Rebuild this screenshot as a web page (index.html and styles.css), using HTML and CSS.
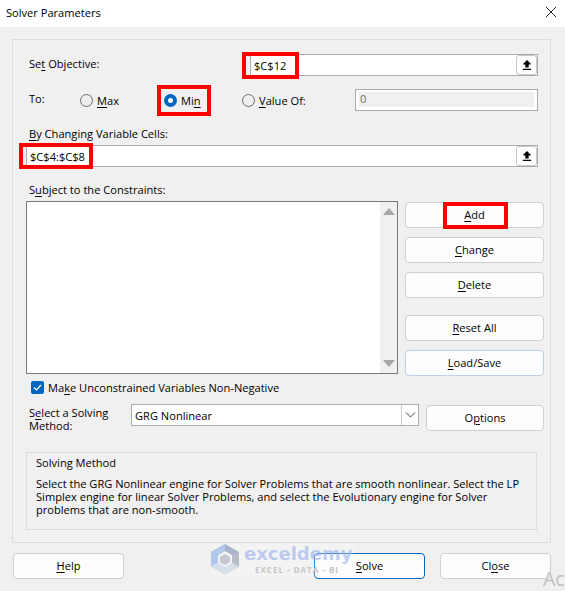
FILE: index.html
```html
<!DOCTYPE html>
<html lang="en">
<head>
  <meta charset="UTF-8">
  <meta name="viewport" content="width=device-width, initial-scale=1.0">
  <title>Solver Parameters</title>
  <link rel="stylesheet" href="styles.css">
</head>
<body>
  <header class="titlebar">
    <div class="title">Solver Parameters</div>
    <svg class="close-x" width="12" height="12" viewBox="0 0 12 12"><path d="M1 1L11 11M11 1L1 11" stroke="#222" stroke-width="1" fill="none"/></svg>
  </header>

  <div class="dialog">
    <div class="panel">
      <!-- objective -->
      <div class="row row-objective">
        <span class="label objective-label">Se<u>t</u> Objective:</span>
        <div class="field field-objective">
          <span class="field-text">$C$12</span>
          <button class="pick">
            <svg width="10" height="10" viewBox="0 0 12 12"><path d="M6 0L10.500 4.500V5.500H8V9H4V5.500H1.500V4.500Z M1 10.500H11V12H1Z" fill="#000"/></svg>
          </button>
          <div class="mark mark-objective"></div>
        </div>
      </div>

      <!-- to: max / min / value -->
      <div class="row row-to">
        <span class="label to-label">To:</span>
        <span class="radio radio-max"><i class="dot"></i><span><u>M</u>ax</span></span>
        <span class="radio radio-min"><i class="dot on"></i><span>Mi<u>n</u></span><div class="mark mark-min"></div></span>
        <span class="radio radio-value"><i class="dot"></i><span><u>V</u>alue Of:</span></span>
        <div class="value-box"><span>0</span></div>
      </div>

      <div class="label label-changing"><u>B</u>y Changing Variable Cells:</div>
      <div class="field field-changing">
        <span class="field-text">$C$4:$C$8</span>
        <button class="pick">
          <svg width="10" height="10" viewBox="0 0 12 12"><path d="M6 0L10.500 4.500V5.500H8V9H4V5.500H1.500V4.500Z M1 10.500H11V12H1Z" fill="#000"/></svg>
        </button>
        <div class="mark mark-changing"></div>
      </div>

      <div class="label label-subject">S<u>u</u>bject to the Constraints:</div>

      <div class="constraints">
        <div class="list">
          <div class="scrollbar">
            <svg width="12" height="7" viewBox="0 0 12 7"><path d="M6 0L12 7H0Z" fill="#a6a6a6"/></svg>
            <svg width="12" height="7" viewBox="0 0 12 7"><path d="M0 0H12L6 7Z" fill="#a6a6a6"/></svg>
          </div>
        </div>
        <div class="side-buttons">
          <button class="btn btn-add"><span><u>A</u>dd</span><div class="mark mark-add"></div></button>
          <button class="btn"><span><u>C</u>hange</span></button>
          <button class="btn"><span><u>D</u>elete</span></button>
          <button class="btn btn-reset"><span><u>R</u>eset All</span></button>
          <button class="btn btn-load"><span><u>L</u>oad/Save</span></button>
        </div>
      </div>

      <div class="check-row">
        <i class="checkbox">
          <svg width="11" height="11" viewBox="0 0 11 11"><path d="M2 5.500L4.500 8L9 3" stroke="#fff" stroke-width="1.200" fill="none"/></svg>
        </i>
        <span>Ma<u>k</u>e Unconstrained Variables Non-Negative</span>
      </div>

      <div class="method-row">
        <div class="label method-label">S<u>e</u>lect a Solving<br>Method:</div>
        <div class="combo">
          <span>GRG Nonlinear</span>
          <div class="combo-drop">
            <svg width="11" height="6" viewBox="0 0 11 6"><path d="M1 0.500L5.500 5L10 0.500" stroke="#444" stroke-width="1" fill="none"/></svg>
          </div>
        </div>
        <button class="btn btn-options"><span>O<u>p</u>tions</span></button>
      </div>

      <div class="group">
        <div class="group-title">Solving Method</div>
        <p>Select the GRG Nonlinear engine for Solver Problems that are smooth nonlinear. Select the LP<br>Simplex engine for linear Solver Problems, and select the Evolutionary engine for Solver<br>problems that are non-smooth.</p>
      </div>
    </div>

    <div class="footer">
      <button class="btn btn-foot"><span><u>H</u>elp</span></button>
      <div class="footer-right">
        <button class="btn btn-foot btn-default"><span><u>S</u>olve</span></button>
        <button class="btn btn-foot"><span>Cl<u>o</u>se</span></button>
      </div>
    </div>
  </div>

  <!-- watermark sits on top of the dialog -->
  <div class="watermark">
    <svg class="wm-logo" width="28" height="31" viewBox="0 0 28 31">
      <path d="M14 0L28 8V15L14 7L0 15V8Z" fill="#a9b4cc"/>
      <path d="M0 8L14 0V7L7 11V19L0 23Z" fill="#b4c8ee"/>
      <path d="M28 8V23L21 19V11Z" fill="#b8bcc4"/>
      <path d="M0 23L7 19L14 23L21 19L28 23L14 31Z" fill="#d5e0e8"/>
      <path d="M9 13L14 10L19 13V18L14 21L9 18Z" fill="#c4c8d0"/>
    </svg>
    <div class="wm-text">
      <div class="wm-name">exceldemy</div>
      <div class="wm-sub">EXCEL - DATA - BI</div>
    </div>
  </div>
  <div class="activate">Ac</div>
</body>
</html>
```

FILE: styles.css
```css
* {
  margin: 0;
  padding: 0;
  box-sizing: border-box;
  font-family: "Open Sans", "Noto Sans", sans-serif;
}

body {
  width: 565px;
  height: 591px;
  overflow: hidden;
  position: relative;
  background-color: #f0f0f0;
  color: #000;
  font-size: 11.1px;
  line-height: 13px;
}

u {
  text-underline-offset: 2px;
}

/* Title bar */
.titlebar {
  height: 27px;
  background-color: #fff;
  display: flex;
  justify-content: space-between;
  align-items: center;
  padding: 0 8px 3px 6px;
}

.title {
  font-size: 11.1px;
}

/* Main panel */
.dialog {
  padding: 12px 14px 0 12px;
}

.panel {
  width: 539px;
  height: 504px;
  border: 1px solid #dcdcdc;
  padding: 14px 0 0 13px;
}

.label {
  display: block;
  line-height: 16px;
}

.row {
  display: flex;
  align-items: center;
  height: 22px;
}

.objective-label {
  margin-left: 3px;
  margin-top: -3px;
  width: 221px;
}

/* Reference fields */
.field {
  position: relative;
  height: 22px;
  width: 288px;
  background-color: #fff;
  border: 1px solid #ababab;
  display: flex;
  align-items: center;
  justify-content: space-between;
  padding-left: 3px;
}

.field-changing {
  width: 512px;
  margin-top: 3px;
}

.pick {
  width: 21px;
  height: 20px;
  margin-right: 0;
  background-color: #fff;
  border: 1px solid #c8c8c8;
  border-radius: 3px;
  display: flex;
  align-items: center;
  justify-content: center;
}

/* Red annotation boxes over the dialog */
.mark {
  position: absolute;
  border: 4px solid #f00;
  pointer-events: none;
}

.mark-objective {
  left: -9px;
  top: -3px;
  width: 57px;
  height: 27px;
}

.mark-changing {
  left: -8px;
  top: -3px;
  width: 74px;
  height: 26px;
}

.mark-min {
  left: -7px;
  top: -9px;
  width: 54px;
  height: 31px;
}

.mark-add {
  left: 37px;
  top: -1px;
  width: 65px;
  height: 27px;
}

/* To row */
.row-to {
  margin-top: 13px;
  position: relative;
}

.to-label {
  margin-left: 3px;
  margin-top: -3px;
  width: 51px;
}

.radio {
  display: inline-flex;
  align-items: center;
  gap: 4px;
  position: relative;
  margin-top: 1px;
}

.dot {
  display: block;
  width: 13px;
  height: 13px;
  border-radius: 50%;
  border: 1px solid #6d6d6d;
  background-color: #f0f0f0;
}

.dot.on {
  border: 4px solid #0067c0;
  background-color: #fff;
}

.radio-max {
  width: 84px;
}

.radio-min {
  width: 78px;
}

.radio-value {
  width: 113px;
}

.value-box {
  width: 183px;
  height: 22px;
  background-color: #fff;
  border: 1px solid #ababab;
  padding: 2px 3px;
}

.value-box span {
  display: block;
  height: 15px;
  background-color: #f0f0f0;
  color: #6d6d6d;
  padding-left: 1px;
}

.label-changing {
  margin-left: 3px;
  margin-top: 15px;
}

.label-subject {
  margin-left: 3px;
  margin-top: 15px;
}

/* Constraint list and buttons */
.constraints {
  display: flex;
  gap: 7px;
  margin-top: 3px;
  height: 175px;
}

.list {
  width: 372px;
  height: 173px;
  background-color: #fff;
  border: 1px solid #7a7a85;
  display: flex;
  justify-content: flex-end;
}

.scrollbar {
  width: 17px;
  height: 100%;
  background-color: #f0f0f0;
  display: flex;
  flex-direction: column;
  justify-content: space-between;
  align-items: center;
  padding: 6px 0;
}

.side-buttons {
  width: 139px;
  display: flex;
  flex-direction: column;
  gap: 9px;
  padding-top: 1px;
}

.btn {
  display: block;
  position: relative;
  height: 26px;
  width: 100%;
  background-color: #fdfdfd;
  border: 1px solid #d0d0d0;
  border-radius: 4px;
  font-size: 11.1px;
  color: #000;
  padding-bottom: 2px;
}

.btn-reset {
  margin-top: 8px;
}

.btn-load {
  border-color: #c0d0e0;
}

/* Checkbox */
.check-row {
  display: flex;
  align-items: center;
  gap: 4px;
  height: 15px;
  margin: 4px 0 0 5px;
}

.checkbox {
  width: 13px;
  height: 13px;
  background-color: #0067c0;
  border-radius: 2px;
  display: flex;
  align-items: center;
  justify-content: center;
}

/* Solving method */
.method-row {
  display: flex;
  margin-top: 9px;
  height: 27px;
}

.method-label {
  margin: 2px 0 0 3px;
  width: 102px;
  line-height: 13px;
}

.combo {
  width: 288px;
  height: 22px;
  background-color: #fff;
  border: 1px solid #ababab;
  display: flex;
  align-items: center;
  justify-content: space-between;
  padding-left: 3px;
}

.combo-drop {
  width: 17px;
  height: 20px;
  border-left: 1px solid #d0d0d0;
  display: flex;
  align-items: center;
  justify-content: center;
}

.btn-options {
  width: 118px;
  margin-left: 7px;
  margin-top: 1px;
}

.group {
  width: 511px;
  height: 78px;
  margin-top: 21px;
  border: 1px solid #dcdcdc;
  padding: 3px 9px;
}

.group-title {
  margin-bottom: 8px;
}

/* Footer buttons */
.footer {
  display: flex;
  justify-content: space-between;
  margin-top: 10px;
  padding-left: 1px;
  width: 539px;
}

.btn-foot {
  width: 111px;
}

.footer-right {
  display: flex;
  gap: 15px;
}

.btn-default {
  border-color: #0067c0;
}

/* Watermark and cut-off activation text */
.watermark {
  position: absolute;
  left: 211px;
  top: 544px;
  width: 143px;
  height: 32px;
  display: flex;
  gap: 5px;
  background-color: rgba(255, 255, 255, 0.2);
  pointer-events: none;
}

.wm-logo {
  flex-shrink: 0;
}

.wm-name {
  font-family: "DejaVu Sans", sans-serif;
  font-weight: bold;
  font-size: 18px;
  line-height: 20px;
  color: rgba(150, 175, 235, 0.6);
}

.wm-sub {
  font-size: 8px;
  line-height: 10px;
  font-weight: bold;
  letter-spacing: 1px;
  color: #c4c4c4;
  white-space: nowrap;
  padding: 1px 0 0 11px;
}

.activate {
  position: absolute;
  left: 543px;
  top: 566px;
  font-size: 19.5px;
  line-height: 26px;
  color: #c0c0c0;
}
```
